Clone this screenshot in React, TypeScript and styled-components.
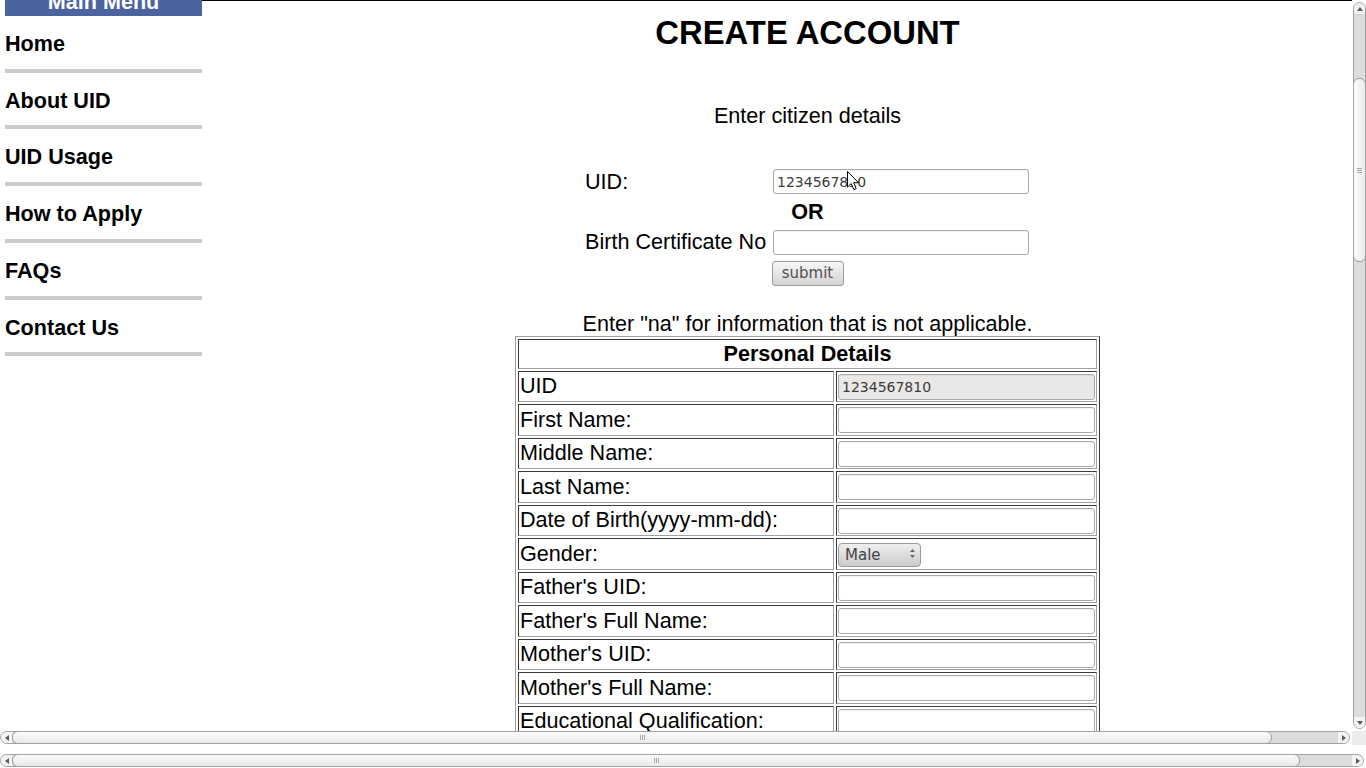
import React from "react";
import styled, { createGlobalStyle } from "styled-components";

const GlobalStyle = createGlobalStyle`
  html, body { margin: 0; padding: 0; background: #fff; overflow: hidden; }
  body { font-family: "Liberation Sans", Arial, sans-serif; }
`;

const Screen = styled.div`
  width: 1366px;
  height: 768px;
  display: flex;
  flex-direction: column;
  overflow: hidden;
  background: #fff;
`;

const FrameRow = styled.div`
  display: flex;
  height: 745px;
  flex: none;
`;

const FrameMain = styled.div`
  width: 1352px;
  display: flex;
  flex-direction: column;
`;

const SideColumn = styled.div`
  width: 14px;
  display: flex;
  flex-direction: column;
`;

const Corner = styled.div`
  width: 14px;
  height: 14px;
  background: #ececec;
`;

const OuterGap = styled.div`
  height: 9px;
  flex: none;
`;

const Page = styled.div`
  height: 731px;
  overflow: hidden;
  display: flex;
  font-size: 21.6px;
  color: #000;
`;

const Sidebar = styled.nav`
  width: 197px;
  margin-left: 5px;
  flex: none;
`;

const MenuHeader = styled.div`
  margin-top: -10px;
  height: 26px;
  background: #4b64a0;
  color: #fff;
  font-weight: bold;
  text-align: center;
  line-height: 24.8px;
`;

const MenuItem = styled.a`
  display: block;
  padding: 16px 0 11.95px;
  border-bottom: 4px solid #cccccc;
  font-weight: bold;
  color: #000;
  text-decoration: none;
  line-height: 24.8px;
`;

const Main = styled.main`
  flex: 1;
  border-top: 1px solid #000;
  padding-left: 61px;
  min-width: 0;
`;

const Title = styled.h1`
  margin: 13px 0 0;
  font-size: 32.8px;
  line-height: 37.7px;
  font-weight: bold;
  text-align: center;
`;

const Note = styled.p<{ $top: number }>`
  margin: ${(p) => p.$top}px 0 0;
  line-height: 24.8px;
  text-align: center;
`;

const FormGrid = styled.div`
  margin: 38px auto 0;
  width: 449px;
  display: grid;
  grid-template-columns: 188px 261px;
  grid-auto-rows: 30.4px;
  align-items: center;
`;

const FormLabel = styled.div`
  padding-left: 2px;
  white-space: nowrap;
  line-height: 24.8px;
`;

const FormField = styled.div`
  padding-left: 2px;
  position: relative;
  display: flex;
  align-items: center;
`;

const FullRow = styled.div<{ $bold?: boolean }>`
  grid-column: 1 / -1;
  display: flex;
  justify-content: center;
  font-weight: ${(p) => (p.$bold ? "bold" : "normal")};
  line-height: 24.8px;
`;

const TextInput = styled.input<{ $w?: number; $h: number; $grey?: boolean }>`
  box-sizing: border-box;
  width: ${(p) => (p.$w ? `${p.$w}px` : "100%")};
  height: ${(p) => p.$h}px;
  margin: 0;
  border: 1px solid #a9a9a9;
  border-radius: 3px;
  padding: 0 3px;
  font: 14px "DejaVu Sans", sans-serif;
  color: #3c3c3c;
  background: ${(p) => (p.$grey ? "#e9e8e6" : "#fff")};
  box-shadow: inset 0 1px 1px rgba(0, 0, 0, 0.06);
  outline: none;
`;

const SubmitButton = styled.button`
  box-sizing: border-box;
  width: 72px;
  height: 25px;
  margin: 0;
  padding: 0 0 1px;
  border: 1px solid #9b9b9b;
  border-radius: 3px;
  background: linear-gradient(#f7f7f7, #d3d3d3);
  font: 15px "DejaVu Sans", sans-serif;
  color: #505050;
`;

const Cursor = styled.svg`
  position: absolute;
  left: 76px;
  top: 2px;
  pointer-events: none;
`;

const DetailsTable = styled.div`
  box-sizing: border-box;
  width: 585px;
  margin: 0 auto;
  display: grid;
  grid-template-columns: 316px 261px;
  grid-template-rows: 29.5px;
  grid-auto-rows: 31.5px;
  gap: 2px;
  padding: 2px;
  border: 1px solid;
  border-color: #a0a0a0 #3a3a3a #3a3a3a #a0a0a0;
`;

const Cell = styled.div<{ $head?: boolean }>`
  box-sizing: border-box;
  border: 1px solid;
  border-color: #3a3a3a #a0a0a0 #a0a0a0 #3a3a3a;
  padding: 1px;
  display: flex;
  align-items: center;
  white-space: nowrap;
  overflow: hidden;
  line-height: 24.8px;
  ${(p) =>
    p.$head
      ? "grid-column: 1 / -1; justify-content: center; font-weight: bold;"
      : ""}
`;

const SelectWrap = styled.div`
  position: relative;
  width: 83px;
  height: 24px;
  margin-top: -2px;
`;

const Select = styled.select`
  appearance: none;
  -webkit-appearance: none;
  box-sizing: border-box;
  width: 83px;
  height: 24px;
  margin: 0;
  border: 1px solid #9a9a9a;
  border-radius: 4px;
  padding: 0 0 0 6px;
  background: linear-gradient(#efefef, #cbcbcb);
  font: 15px "DejaVu Sans", sans-serif;
  color: #454545;
  outline: none;
`;

const SelectArrows = styled.svg`
  position: absolute;
  right: 6px;
  top: 8px;
  pointer-events: none;
`;

/* scrollbars */
const Bar = styled.div<{ $v?: boolean }>`
  box-sizing: border-box;
  display: flex;
  flex-direction: ${(p) => (p.$v ? "column" : "row")};
  ${(p) =>
    p.$v
      ? "width: 13px; height: 100%; margin-left: 1px;"
      : "height: 13px; width: 100%;"}
  border: 1px solid #a3a3a3;
  border-radius: 7px;
  background: #dcdcdc;
  overflow: hidden;
`;

const BarHolder = styled.div<{ $v?: boolean; $len: number; $end: number }>`
  box-sizing: border-box;
  flex: none;
  ${(p) =>
    p.$v
      ? `height: ${p.$len}px; width: 14px; padding: 2px 0 ${p.$end}px;`
      : `width: ${p.$len}px; height: 14px; padding: 0 ${p.$end}px 1px 0;`}
  background: #fff;
`;

const ArrowBtn = styled.div<{ $v?: boolean }>`
  flex: none;
  ${(p) => (p.$v ? "height: 11px;" : "width: 11px;")}
  display: flex;
  align-items: center;
  justify-content: center;
  background: #f3f3f3;
`;

const Spacer = styled.div<{ $size?: number }>`
  flex: ${(p) => (p.$size === undefined ? "1" : `0 0 ${p.$size}px`)};
`;

const Thumb = styled.div<{ $v?: boolean; $size: number }>`
  flex: 0 0 ${(p) => p.$size}px;
  box-sizing: border-box;
  ${(p) => (p.$v ? "margin: 0 -1px;" : "margin: -1px 0;")}
  border: 1px solid #9c9c9c;
  border-radius: 6px;
  background: ${(p) =>
    p.$v
      ? "linear-gradient(90deg, #fbfbfb, #ebebeb)"
      : "linear-gradient(#fbfbfb, #e9e9e9)"};
  display: flex;
  align-items: center;
  justify-content: center;
`;

function Triangle({ dir }: { dir: "up" | "down" | "left" | "right" }) {
  const pts = {
    up: "0,4 3,0 6,4",
    down: "0,0 6,0 3,4",
    left: "4,0 4,6 0,3",
    right: "0,0 0,6 4,3",
  }[dir];
  const vert = dir === "up" || dir === "down";
  return (
    <svg width={vert ? 6 : 4} height={vert ? 4 : 6} viewBox={vert ? "0 0 6 4" : "0 0 4 6"}>
      <polygon points={pts} fill="#5a5a5a" />
    </svg>
  );
}

function Grip({ v }: { v?: boolean }) {
  return v ? (
    <svg width="5" height="5" viewBox="0 0 5 5">
      <path d="M0 0.5H5M0 2.5H5M0 4.5H5" stroke="#a8a8a8" strokeWidth="1" />
    </svg>
  ) : (
    <svg width="5" height="5" viewBox="0 0 5 5">
      <path d="M0.5 0V5M2.5 0V5M4.5 0V5" stroke="#a8a8a8" strokeWidth="1" />
    </svg>
  );
}

function ScrollBar({
  v,
  len,
  end,
  pre,
  thumb,
}: {
  v?: boolean;
  len: number;
  end: number;
  pre: number;
  thumb: number;
}) {
  return (
    <BarHolder $v={v} $len={len} $end={end}>
      <Bar $v={v}>
        <ArrowBtn $v={v}>
          <Triangle dir={v ? "up" : "left"} />
        </ArrowBtn>
        <Spacer $size={pre} />
        <Thumb $v={v} $size={thumb}>
          <Grip v={v} />
        </Thumb>
        <Spacer />
        <ArrowBtn $v={v}>
          <Triangle dir={v ? "down" : "right"} />
        </ArrowBtn>
      </Bar>
    </BarHolder>
  );
}

const menu = ["Home", "About UID", "UID Usage", "How to Apply", "FAQs", "Contact Us"];

const rows: { label: string; kind: "text" | "readonly" | "gender" }[] = [
  { label: "UID", kind: "readonly" },
  { label: "First Name:", kind: "text" },
  { label: "Middle Name:", kind: "text" },
  { label: "Last Name:", kind: "text" },
  { label: "Date of Birth(yyyy-mm-dd):", kind: "text" },
  { label: "Gender:", kind: "gender" },
  { label: "Father's UID:", kind: "text" },
  { label: "Father's Full Name:", kind: "text" },
  { label: "Mother's UID:", kind: "text" },
  { label: "Mother's Full Name:", kind: "text" },
  { label: "Educational Qualification:", kind: "text" },
];

export default function App() {
  return (
    <Screen>
      <GlobalStyle />
      <FrameRow>
        <FrameMain>
          <Page>
            <Sidebar>
              <MenuHeader>Main Menu</MenuHeader>
              {menu.map((m) => (
                <MenuItem key={m} href="#">
                  {m}
                </MenuItem>
              ))}
            </Sidebar>
            <Main>
              <Title>CREATE ACCOUNT</Title>
              <Note $top={52.3}>Enter citizen details</Note>
              <FormGrid>
                <FormLabel>UID:</FormLabel>
                <FormField>
                  <TextInput $w={256} $h={25} defaultValue="1234567810" />
                  <Cursor width="13" height="20" viewBox="0 0 13 20">
                    <path
                      d="M0.5 0.5 L0.5 16 L4.2 12.6 L6.8 18.6 L9.2 17.6 L6.7 11.7 L11.5 11.7 Z"
                      fill="#fff"
                      stroke="#000"
                      strokeWidth="1"
                      strokeLinejoin="round"
                    />
                  </Cursor>
                </FormField>
                <FullRow $bold>OR</FullRow>
                <FormLabel>Birth Certificate No</FormLabel>
                <FormField>
                  <TextInput $w={256} $h={25} />
                </FormField>
                <FullRow>
                  <SubmitButton>submit</SubmitButton>
                </FullRow>
              </FormGrid>
              <Note $top={23.2}>Enter "na" for information that is not applicable.</Note>
              <DetailsTable>
                <Cell $head>Personal Details</Cell>
                {rows.map((r) => (
                  <React.Fragment key={r.label}>
                    <Cell>{r.label}</Cell>
                    <Cell>
                      {r.kind === "gender" ? (
                        <SelectWrap>
                          <Select defaultValue="Male">
                            <option>Male</option>
                            <option>Female</option>
                          </Select>
                          <SelectArrows width="5" height="9" viewBox="0 0 5 9">
                            <polygon points="0,3 5,3 2.5,0" fill="#666" />
                            <polygon points="0,6 5,6 2.5,9" fill="#666" />
                          </SelectArrows>
                        </SelectWrap>
                      ) : r.kind === "readonly" ? (
                        <TextInput $h={26} $grey readOnly defaultValue="1234567810" />
                      ) : (
                        <TextInput $h={26} />
                      )}
                    </Cell>
                  </React.Fragment>
                ))}
              </DetailsTable>
            </Main>
          </Page>
          <ScrollBar len={1352} end={2} pre={0} thumb={1260} />
        </FrameMain>
        <SideColumn>
          <ScrollBar v len={731} end={2} pre={64} thumb={184} />
          <Corner />
        </SideColumn>
      </FrameRow>
      <OuterGap />
      <ScrollBar len={1366} end={2} pre={0} thumb={1288} />
    </Screen>
  );
}
